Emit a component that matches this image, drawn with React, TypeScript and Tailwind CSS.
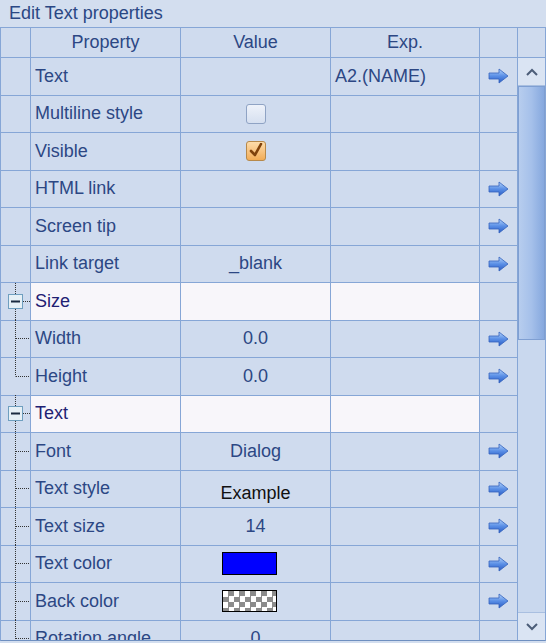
import React from "react";

type Row = {
  label: string;
  value?: React.ReactNode;
  exp?: string;
  arrow?: boolean;
  section?: boolean;
  tree?: "none" | "section" | "mid" | "end";
};

function Arrow() {
  return (
    <svg width="21" height="16" viewBox="0 0 21 16">
      <defs>
        <linearGradient id="ag" x1="0" y1="0" x2="0" y2="1">
          <stop offset="0" stopColor="#b4d4fb" />
          <stop offset="0.5" stopColor="#5a8fe6" />
          <stop offset="1" stopColor="#2a5cc4" />
        </linearGradient>
      </defs>
      <path d="M1 5 H11 V1 L20 8 L11 15 V11 H1 Z" fill="url(#ag)" stroke="#3563bd" strokeWidth="0.8" strokeLinejoin="round" />
    </svg>
  );
}

function CheckBox({ checked }: { checked?: boolean }) {
  if (checked) {
    return (
      <div className="w-[20px] h-[20px] rounded-[3px] border border-[#b7894a] bg-gradient-to-b from-[#fddcaa] to-[#f2ac55] flex items-center justify-center">
        <svg width="16" height="16" viewBox="0 0 16 16">
          <path d="M3 8 L7 12 L13 1" fill="none" stroke="#7f420c" strokeWidth="2.6" strokeLinecap="round" strokeLinejoin="round" />
        </svg>
      </div>
    );
  }
  return <div className="w-[20px] h-[20px] rounded-[3px] border border-[#8fa3c4] bg-gradient-to-b from-[#eef2fa] to-[#d6e0f0]" />;
}

function Tree({ kind }: { kind: Row["tree"] }) {
  if (!kind || kind === "none") return null;
  return (
    <svg width="29" height="37" viewBox="0 0 29 37" className="block">
      {kind === "section" && (
        <>
          <line x1="14.5" y1="0" x2="14.5" y2="11" stroke="#333" strokeDasharray="1 1" />
          <line x1="14.5" y1="26" x2="14.5" y2="37" stroke="#333" strokeDasharray="1 1" />
          <line x1="22" y1="18.5" x2="29" y2="18.5" stroke="#333" strokeDasharray="1 1" />
          <rect x="7.5" y="11.5" width="14" height="14" fill="#e6f0f6" stroke="#6f9fbf" />
          <line x1="10" y1="18.5" x2="19" y2="18.5" stroke="#1a2a40" strokeWidth="2" />
        </>
      )}
      {kind === "mid" && (
        <>
          <line x1="14.5" y1="0" x2="14.5" y2="37" stroke="#333" strokeDasharray="1 1" />
          <line x1="15" y1="18.5" x2="28" y2="18.5" stroke="#333" strokeDasharray="1 1" />
        </>
      )}
      {kind === "end" && (
        <>
          <line x1="14.5" y1="0" x2="14.5" y2="18.5" stroke="#333" strokeDasharray="1 1" />
          <line x1="15" y1="18.5" x2="28" y2="18.5" stroke="#333" strokeDasharray="1 1" />
        </>
      )}
    </svg>
  );
}

const swatchBlue = <div className="w-[55px] h-[23px] mr-[13px] border border-black bg-[#0000ff]" />;
const swatchClear = (
  <div className="w-[55px] h-[22px] mr-[13px] border border-black bg-[image:repeating-conic-gradient(#8c8c8c_0_25%,#ffffff_0_50%)] bg-[length:11px_11px]" />
);

const rows: Row[] = [
  { label: "Text", exp: "A2.(NAME)", arrow: true },
  { label: "Multiline style", value: <CheckBox /> },
  { label: "Visible", value: <CheckBox checked /> },
  { label: "HTML link", arrow: true },
  { label: "Screen tip", arrow: true },
  { label: "Link target", value: "_blank", arrow: true },
  { label: "Size", section: true, tree: "section" },
  { label: "Width", value: "0.0", arrow: true, tree: "mid" },
  { label: "Height", value: "0.0", arrow: true, tree: "end" },
  { label: "Text", section: true, tree: "section" },
  { label: "Font", value: "Dialog", arrow: true, tree: "mid" },
  { label: "Text style", value: <span className="text-[#111] pt-[10px]">Example</span>, arrow: true, tree: "mid" },
  { label: "Text size", value: "14", arrow: true, tree: "mid" },
  { label: "Text color", value: swatchBlue, arrow: true, tree: "mid" },
  { label: "Back color", value: swatchClear, arrow: true, tree: "mid" },
  { label: "Rotation angle", value: "0", tree: "mid" },
];

function Chevron({ up }: { up?: boolean }) {
  return (
    <svg width="12" height="8" viewBox="0 0 12 8">
      <polyline points={up ? "1,7 6,2 11,7" : "1,1 6,6 11,1"} fill="none" stroke="#4c5d78" strokeWidth="2" />
    </svg>
  );
}

export default function App() {
  const cell = "border-r border-[#86a6d6] h-full flex items-center whitespace-nowrap";
  return (
    <div className="w-[546px] h-[643px] bg-[#d3deef] font-['Liberation_Sans',Arial,sans-serif] text-[18px] text-[#2c4784] overflow-hidden">
      <div className="h-[27px] pl-[9px] flex items-center text-[#2a4784]">Edit Text properties</div>

      <div className="border border-[#86a6d6] border-b-[#6e8fc0] bg-[#cfdbee]">
        {/* header */}
        <div className="flex h-[30px] border-b border-[#86a6d6]">
          <div className={`${cell} w-[30px]`} />
          <div className={`${cell} w-[150px] justify-center`}>Property</div>
          <div className={`${cell} w-[150px] justify-center`}>Value</div>
          <div className={`${cell} w-[149px] justify-center`}>Exp.</div>
          <div className={`${cell} w-[38px]`} />
          <div className="w-[27px]" />
        </div>

        {/* body */}
        <div className="flex h-[582px] overflow-hidden">
          <div className="flex flex-col w-[517px]">
            {rows.map((r, i) => (
              <div key={i} className="flex h-[37.5px] shrink-0 border-b border-[#86a6d6]">
                <div className={`${cell} w-[30px]`}>
                  <Tree kind={r.tree} />
                </div>
                <div className={`${cell} w-[150px] pl-[4px] ${r.section ? "bg-[#f8f6fa] text-[#1f2173]" : ""}`}>{r.label}</div>
                <div className={`${cell} w-[150px] justify-center ${r.section ? "bg-[#f8f6fa]" : ""}`}>{r.value}</div>
                <div className={`${cell} w-[149px] pl-[4px] ${r.section ? "bg-[#f8f6fa]" : ""}`}>{r.exp}</div>
                <div className={`${cell} w-[38px] justify-center`}>{r.arrow && <Arrow />}</div>
              </div>
            ))}
          </div>

          {/* scrollbar */}
          <div className="w-[27px] flex flex-col bg-[#c9d8ee]">
            <div className="h-[28px] shrink-0 bg-[#dae4f3] border-b border-[#a9bfe0] flex items-center justify-center">
              <Chevron up />
            </div>
            <div className="h-[254px] shrink-0 border border-[#7f9fd2] bg-gradient-to-r from-[#b7cdee] via-[#a5c0ea] to-[#86a8de]" />
            <div className="flex-1" />
            <div className="h-[28px] shrink-0 bg-[#dae4f3] border-t border-[#a9bfe0] flex items-center justify-center">
              <Chevron />
            </div>
          </div>
        </div>
      </div>
    </div>
  );
}
